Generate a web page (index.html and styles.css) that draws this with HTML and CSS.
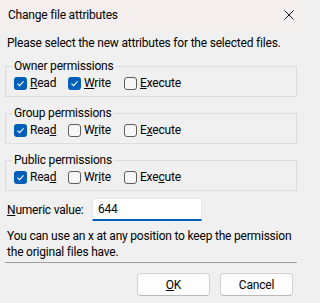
FILE: index.html
```html
<!DOCTYPE html>
<html>
<head>
<meta charset="utf-8">
<link rel="stylesheet" href="styles.css">
</head>
<body>
<div class="dialog">
  <div class="titlebar">
    <span class="title">Change file attributes</span>
    <svg class="close" width="10" height="10" viewBox="0 0 10 10"><path d="M0.5 0.5 L9.5 9.5 M9.5 0.5 L0.5 9.5" stroke="#1a1a1a" stroke-width="1" fill="none"/></svg>
  </div>
  <div class="main">
    <p class="intro">Please select the new attributes for the selected files.</p>

    <fieldset class="group">
      <legend>Owner permissions</legend>
      <div class="row">
        <label class="cb"><span class="box checked"><svg width="13" height="13" viewBox="0 0 13 13"><path d="M3.5 6.6 L5.6 8.6 L9.6 4.4" stroke="#fff" stroke-width="1.1" fill="none"/></svg></span><span><u>R</u>ead</span></label>
        <label class="cb"><span class="box checked"><svg width="13" height="13" viewBox="0 0 13 13"><path d="M3.5 6.6 L5.6 8.6 L9.6 4.4" stroke="#fff" stroke-width="1.1" fill="none"/></svg></span><span><u>W</u>rite</span></label>
        <label class="cb"><span class="box"></span><span><u>E</u>xecute</span></label>
      </div>
    </fieldset>

    <fieldset class="group">
      <legend>Group permissions</legend>
      <div class="row">
        <label class="cb"><span class="box checked"><svg width="13" height="13" viewBox="0 0 13 13"><path d="M3.5 6.6 L5.6 8.6 L9.6 4.4" stroke="#fff" stroke-width="1.1" fill="none"/></svg></span><span>Rea<u>d</u></span></label>
        <label class="cb"><span class="box"></span><span>W<u>r</u>ite</span></label>
        <label class="cb"><span class="box"></span><span>E<u>x</u>ecute</span></label>
      </div>
    </fieldset>

    <fieldset class="group">
      <legend>Public permissions</legend>
      <div class="row">
        <label class="cb"><span class="box checked"><svg width="13" height="13" viewBox="0 0 13 13"><path d="M3.5 6.6 L5.6 8.6 L9.6 4.4" stroke="#fff" stroke-width="1.1" fill="none"/></svg></span><span>Rea<u>d</u></span></label>
        <label class="cb"><span class="box"></span><span>Wr<u>i</u>te</span></label>
        <label class="cb"><span class="box"></span><span>Exe<u>c</u>ute</span></label>
      </div>
    </fieldset>

    <div class="numeric">
      <span class="numlabel"><u>N</u>umeric value:</span>
      <div class="input">644</div>
    </div>

    <p class="help">You can use an x at any position to keep the permission<br>the original files have.</p>

    <div class="sep"></div>

    <div class="buttons">
      <div class="btn"><u>O</u>K</div>
      <div class="btn">Cancel</div>
    </div>
  </div>
</div>
</body>
</html>
```

FILE: styles.css
```css
html, body {
  margin: 0;
  padding: 0;
}
body {
  width: 303px;
  height: 303px;
  overflow: hidden;
  background: #f0f0f0;
  font-family: Roboto, "Liberation Sans", sans-serif;
  font-size: 12px;
  letter-spacing: -0.2px;
  color: #000;
}
.dialog {
  width: 303px;
  height: 303px;
  background: #f0f0f0;
}
.titlebar {
  height: 30px;
  background: #f4eeee;
  display: flex;
  align-items: center;
  justify-content: space-between;
  padding: 0 9px 0 8px;
  box-sizing: border-box;
}
.title {
  line-height: 16px;
}
.close {
  display: block;
}
.main {
  padding: 0 6px 0 5px;
}
.intro {
  margin: 5px 0 0 2px;
  line-height: 16px;
  white-space: nowrap;
}
.group {
  margin: 7px 0 0 0;
  border: 1px solid #dcdcdc;
  padding: 0 6px 5px 6px;
  min-width: 0;
}
.group + .group {
  margin-top: 8px;
}
.group legend {
  padding: 0 2px;
  line-height: 16px;
}
.row {
  margin: 1px 0 0 2px;
  display: grid;
  grid-template-columns: 54px 56px auto;
  height: 16px;
  align-items: center;
}
.cb {
  display: flex;
  align-items: center;
  gap: 3px;
  line-height: 16px;
}
.box {
  width: 13px;
  height: 13px;
  box-sizing: border-box;
  border: 1px solid #5c5c5c;
  border-radius: 3px;
  background: #f7f7f7;
  display: block;
  flex: none;
}
.box.checked {
  border: none;
  background: #005fb8;
}
.box svg {
  display: block;
}
.numeric {
  margin-top: 7px;
  display: flex;
  align-items: center;
  padding-left: 2px;
}
.numlabel {
  width: 85px;
  line-height: 16px;
}
.input {
  width: 110px;
  height: 23px;
  box-sizing: border-box;
  background: #fff;
  border: 1px solid #e6e6e6;
  border-bottom: 2px solid #005fb8;
  border-radius: 2px 2px 0 0;
  padding-left: 5px;
  line-height: 20px;
}
.help {
  margin: 7px 0 0 2px;
  line-height: 16px;
  white-space: nowrap;
}
.sep {
  margin-top: 2px;
  border-top: 1px solid #a0a0a0;
}
.buttons {
  margin-top: 10px;
  display: flex;
  justify-content: flex-end;
  gap: 10px;
  padding-right: 4px;
}
.btn {
  width: 73px;
  height: 23px;
  box-sizing: border-box;
  background: #fdfdfd;
  border: 1px solid #d0d0d0;
  border-bottom-color: #b8b8b8;
  border-radius: 4px;
  display: flex;
  align-items: center;
  justify-content: center;
  line-height: 16px;
}
```
